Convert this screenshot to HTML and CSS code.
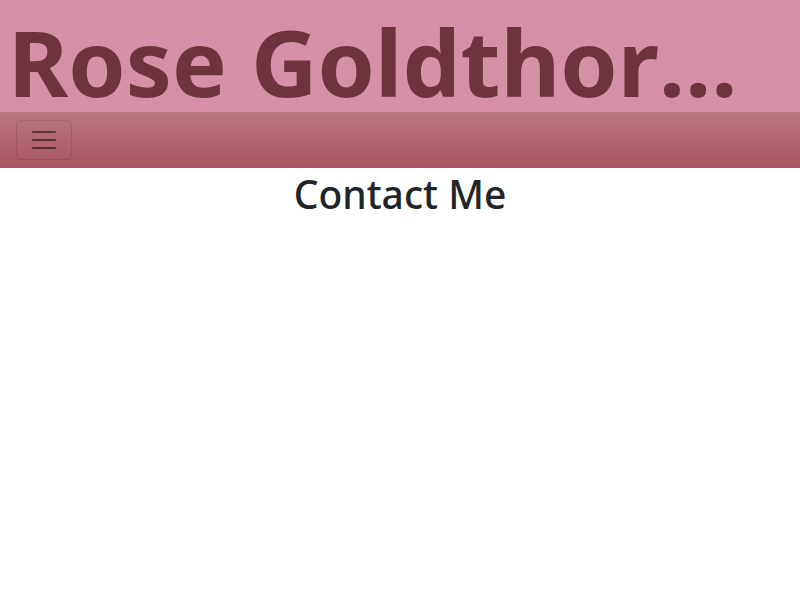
FILE: index.html
```html
<!DOCTYPE html>
<html lang="en">
<head>
<meta charset="utf-8">
<meta name="viewport" content="width=device-width, initial-scale=1">
<title>Rose Goldthor…</title>
<link rel="stylesheet" href="styles.css">
</head>
<body>
<header class="banner">
  <h1 class="banner-title">Rose Goldthor…</h1>
</header>
<nav class="navbar">
  <button class="toggler" type="button" aria-label="Toggle navigation">
    <svg class="toggler-icon" viewBox="0 0 30 30" aria-hidden="true"><path d="M4 7h22M4 15h22M4 23h22"/></svg>
  </button>
</nav>
<main>
  <h2 class="page-title">Contact Me</h2>
</main>
</body>
</html>
```
FILE: styles.css
```css
* {
  box-sizing: border-box;
}

body {
  margin: 0;
  background: #fff;
  color: #212529;
  font-family: "Segoe UI", "Noto Sans", "Open Sans", sans-serif;
}

.banner {
  padding: 12px 8px 0;
  background: #d690a8;
}

.banner-title {
  margin: 0;
  color: #6d343d;
  font-size: 92px;
  font-weight: 700;
  font-kerning: none;
  line-height: 100px;
  white-space: nowrap;
}

.navbar {
  display: flex;
  padding: 8px 16px;
  background: linear-gradient(#ba7781, #a95562);
}

.toggler {
  display: flex;
  padding: 4px 12px;
  border: 1px solid rgba(0, 0, 0, 0.1);
  border-radius: 4px;
  background: transparent;
}

.toggler-icon {
  width: 30px;
  height: 30px;
  fill: none;
  stroke: rgba(0, 0, 0, 0.5);
  stroke-width: 2;
  stroke-linecap: round;
  stroke-miterlimit: 10;
}

.page-title {
  margin: 0 0 8px;
  padding-top: 2px;
  font-size: 39px;
  font-weight: 500;
  line-height: 48px;
  text-align: center;
}
```
